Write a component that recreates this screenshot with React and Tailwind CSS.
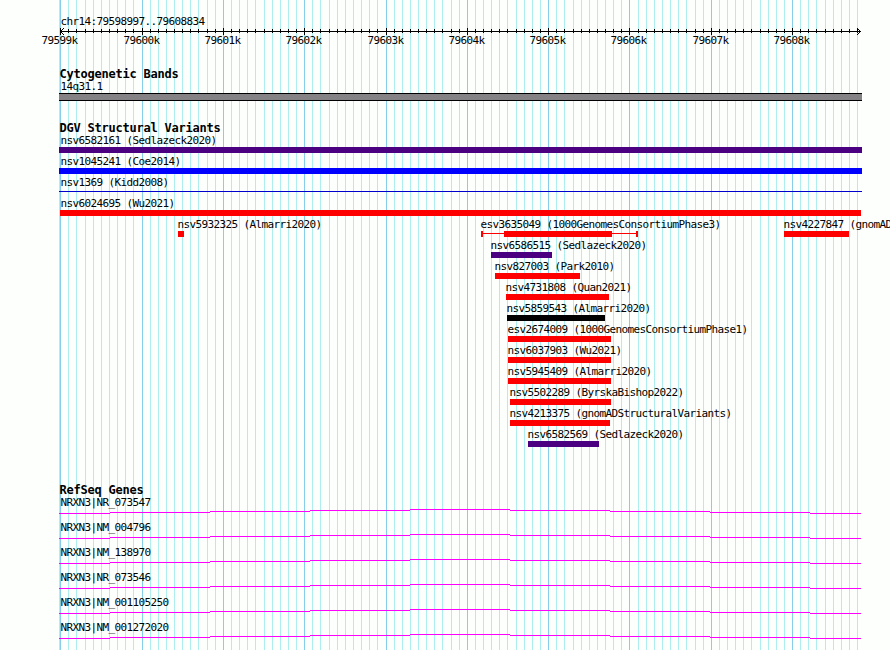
const ORIGIN = 60.735;
const STEP = 8.1317;

const gridLines = Array.from({ length: 99 }, (_, i) => ({
  x: Math.floor(ORIGIN + i * STEP),
  major: i % 10 === 0,
}));

const ticks = gridLines.filter((line) => line.major);

const fullWidth = [
  { name: "nsv6582161 (Sedlazeck2020)", start: 59, end: 862, color: "#4b0082", label: 60 },
  { name: "nsv1045241 (Coe2014)", start: 59, end: 862, color: "#0000ff", label: 60 },
  { name: "nsv1369 (Kidd2008)", start: 59, end: 862, color: "#0000cd", label: 60, thin: true },
  { name: "nsv6024695 (Wu2021)", start: 60, end: 861, color: "#ff0000", label: 60 },
];

const variantRows = [
  ...fullWidth.map((f) => [f]),
  [
    { name: "nsv5932325 (Almarri2020)", start: 178, end: 184, color: "#ff0000" },
    {
      name: "esv3635049 (1000GenomesConsortiumPhase3)",
      start: 481,
      end: 638,
      color: "#ff0000",
      core: [504, 612],
    },
    { name: "nsv4227847 (gnomADStructuralVariants)", start: 784, end: 849, color: "#ff0000" },
  ],
  [{ name: "nsv6586515 (Sedlazeck2020)", start: 491, end: 552, color: "#4b0082" }],
  [{ name: "nsv827003 (Park2010)", start: 495, end: 580, color: "#ff0000" }],
  [{ name: "nsv4731808 (Quan2021)", start: 506, end: 609, color: "#ff0000" }],
  [{ name: "nsv5859543 (Almarri2020)", start: 507, end: 605, color: "#000000" }],
  [{ name: "esv2674009 (1000GenomesConsortiumPhase1)", start: 508, end: 611, color: "#ff0000" }],
  [{ name: "nsv6037903 (Wu2021)", start: 508, end: 611, color: "#ff0000" }],
  [{ name: "nsv5945409 (Almarri2020)", start: 508, end: 611, color: "#ff0000" }],
  [{ name: "nsv5502289 (ByrskaBishop2022)", start: 510, end: 611, color: "#ff0000" }],
  [{ name: "nsv4213375 (gnomADStructuralVariants)", start: 510, end: 610, color: "#ff0000" }],
  [{ name: "nsv6582569 (Sedlazeck2020)", start: 528, end: 599, color: "#4b0082" }],
];

const genes = [
  "NRXN3|NR_073547",
  "NRXN3|NM_004796",
  "NRXN3|NM_138970",
  "NRXN3|NR_073546",
  "NRXN3|NM_001105250",
  "NRXN3|NM_001272020",
];

// Intron line segments: [from, to, y offset]
const intron = [
  [59, 110, 4],
  [110, 210, 3],
  [210, 310, 2],
  [310, 410, 1],
  [410, 510, 0],
  [510, 610, 1],
  [610, 710, 2],
  [710, 810, 3],
  [810, 861, 4],
];

function Grid() {
  return (
    <svg className="absolute inset-0" width="890" height="650" shapeRendering="crispEdges">
      <rect x="59" y="0" width="1" height="650" fill="#afeeee" />
      {gridLines.map(({ x, major }) => (
        <rect key={x} x={x} y="0" width="1" height="650" fill={major ? "#87ceeb" : "#afeeee"} />
      ))}
    </svg>
  );
}

function Ruler() {
  return (
    <svg className="block" width="890" height="8" shapeRendering="crispEdges">
      <rect x="60" y="3" width="801" height="1" />
      {gridLines.map(({ x, major }) => (
        <rect key={x} x={x} y={major ? 0 : 1} width="1" height={major ? 7 : 4} />
      ))}
      {[1, 2, 3].map((d) => (
        <g key={d}>
          <rect x={60 + d} y={3 - d} width="1" height="1" />
          <rect x={60 + d} y={3 + d} width="1" height="1" />
          <rect x={860 - d} y={3 - d} width="1" height="1" />
          <rect x={860 - d} y={3 + d} width="1" height="1" />
        </g>
      ))}
    </svg>
  );
}

function Heading({ children }) {
  return (
    <h2 className="ml-[59.5px] h-[13px] text-[12px] font-bold leading-[13px] tracking-[-0.224px]">
      {children}
    </h2>
  );
}

function Glyph({ feature }) {
  const { start, end, color, thin, core } = feature;
  const width = end - start;
  if (core) {
    return (
      <div className="flex h-[6px]" style={{ width }}>
        <div className="h-[6px] w-[2px] bg-[#ff0000]" />
        <div className="mt-[2px] h-px bg-[#ff0000]" style={{ width: core[0] - start - 2 }} />
        <div className="h-[6px] bg-[#ff0000]" style={{ width: core[1] - core[0] }} />
        <div className="mt-[2px] h-px bg-[#ff0000]" style={{ width: end - core[1] - 2 }} />
        <div className="h-[6px] w-[2px] bg-[#ff0000]" />
      </div>
    );
  }
  return (
    <div
      className={thin ? "mt-px h-px" : "h-[6px]"}
      style={{ width, backgroundColor: color }}
    />
  );
}

function Feature({ feature, offset }) {
  const label = feature.label ?? feature.start - 1;
  return (
    <div className="w-0 shrink-0" style={{ marginLeft: offset }}>
      <div
        className={feature.thin ? "h-[14px] w-max" : "h-[13px] w-max"}
        style={{ marginLeft: label - feature.start + 0.5 }}
      >
        {feature.name}
      </div>
      <Glyph feature={feature} />
    </div>
  );
}

function VariantRow({ features }) {
  return (
    <div className="flex h-[21px]">
      {features.map((f, i) => (
        <Feature key={f.name} feature={f} offset={f.start - (i ? features[i - 1].start : 0)} />
      ))}
    </div>
  );
}

export default function App() {
  return (
    <div className="relative h-[650px] w-[890px] overflow-hidden whitespace-pre bg-[#fdfffc] font-['DejaVu_Sans_Mono',monospace] text-[11px] leading-[13px] tracking-[-0.622px] text-black">
      <Grid />
      <main className="relative flex flex-col">
        <section className="h-[68px] pt-[15px]">
          <div className="ml-[60.5px] h-[13px]">chr14:79598997..79608834</div>
          <Ruler />
          <div className="-mt-[2px] flex pl-[41.5px]">
            {ticks.map((t, i) => (
              <div
                key={t.x}
                className="shrink-0"
                style={{ width: i < ticks.length - 1 ? ticks[i + 1].x - t.x : 40 }}
              >
                {79599 + i}k
              </div>
            ))}
          </div>
        </section>

        <section className="h-[54px]">
          <Heading>Cytogenetic Bands</Heading>
          <div className="-mt-px ml-[60.5px] h-[13px]">14q31.1</div>
          <div className="ml-[59px] h-[8px] w-[803px] border-y border-black bg-[#848284]" />
        </section>

        <section className="h-[362px]">
          <Heading>DGV Structural Variants</Heading>
          <div className="-mt-px">
            {variantRows.map((features) => (
              <VariantRow key={features[0].name} features={features} />
            ))}
          </div>
        </section>

        <section>
          <Heading>RefSeq Genes</Heading>
          <div className="-mt-px">
            {genes.map((gene) => (
              <div key={gene} className="h-[25px]">
                <div className="ml-[60.5px] h-[13px]">{gene}</div>
                <svg className="block" width="890" height="5" shapeRendering="crispEdges">
                  {intron.map(([from, to, y]) => (
                    <rect key={from} x={from} y={y} width={to - from} height="1" fill="#ff00ff" />
                  ))}
                </svg>
              </div>
            ))}
          </div>
        </section>
      </main>
    </div>
  );
}
